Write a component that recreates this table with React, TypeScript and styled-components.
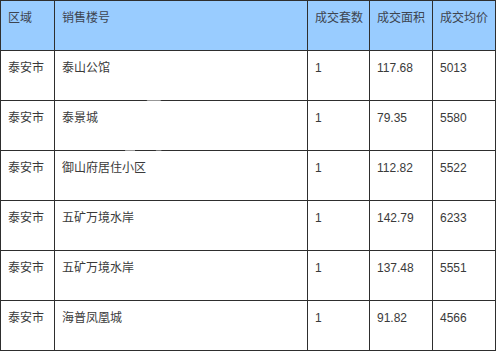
import * as React from "react";
import styled, { createGlobalStyle } from "styled-components";

const rows = [
  { area: "泰安市", name: "泰山公馆", count: "1", size: "117.68", price: "5013" },
  { area: "泰安市", name: "泰景城", count: "1", size: "79.35", price: "5580" },
  { area: "泰安市", name: "御山府居住小区", count: "1", size: "112.82", price: "5522" },
  { area: "泰安市", name: "五矿万境水岸", count: "1", size: "142.79", price: "6233" },
  { area: "泰安市", name: "五矿万境水岸", count: "1", size: "137.48", price: "5551" },
  { area: "泰安市", name: "海普凤凰城", count: "1", size: "91.82", price: "4566" },
];

const headings = ["区域", "销售楼号", "成交套数", "成交面积", "成交均价"];
const widths = [54, 253, 62, 63, 63];

function App() {
  return (
    <Page>
      <GlobalStyle />
      <Table>
        <colgroup>
          {widths.map((w, i) => (
            <col key={i} style={{ width: w }} />
          ))}
        </colgroup>
        <thead>
          <tr>
            {headings.map((h) => (
              <HeadCell key={h}>{h}</HeadCell>
            ))}
          </tr>
        </thead>
        <tbody>
          {rows.map((r, i) => (
            <tr key={i}>
              <Cell>{r.area}</Cell>
              <Cell>{r.name}</Cell>
              <Cell>{r.count}</Cell>
              <Cell>{r.size}</Cell>
              <Cell>{r.price}</Cell>
            </tr>
          ))}
        </tbody>
      </Table>
      <Watermark viewBox="0 0 200 140" aria-hidden="true">
        <path
          d="M20 120 C 30 50, 110 20, 170 60"
          fill="none"
          stroke="#ffffff"
          strokeWidth="10"
          strokeLinecap="round"
          opacity="0.5"
        />
        <path
          d="M45 130 C 60 80, 120 70, 150 100"
          fill="none"
          stroke="#ffffff"
          strokeWidth="5"
          strokeLinecap="round"
          opacity="0.35"
        />
      </Watermark>
    </Page>
  );
}

const GlobalStyle = createGlobalStyle`
  body {
    margin: 0;
    background: #ffffff;
  }
`;

const Page = styled.div`
  position: relative;
  width: 500px;
  height: 354px;
  overflow: hidden;
  font-family: "Liberation Sans", "Noto Sans CJK SC", sans-serif;
  font-size: 12px;
  color: #3a3a3a;
`;

const Table = styled.table`
  border-collapse: collapse;
  table-layout: fixed;
  width: 495px;
  border: 1px solid #2e2e2e;

  tr {
    height: 50px;
  }
`;

const Cell = styled.td`
  border: 1px solid #2e2e2e;
  padding: 9px 6px 0 7px;
  vertical-align: top;
  line-height: 16px;
  white-space: nowrap;
`;

const HeadCell = styled(Cell).attrs({ as: "th" })`
  background: #99ccff;
  font-weight: normal;
  text-align: left;
  color: #3d4450;
`;

const Watermark = styled.svg`
  position: absolute;
  left: 110px;
  top: 30px;
  width: 200px;
  height: 140px;
  pointer-events: none;
`;

export default App;
